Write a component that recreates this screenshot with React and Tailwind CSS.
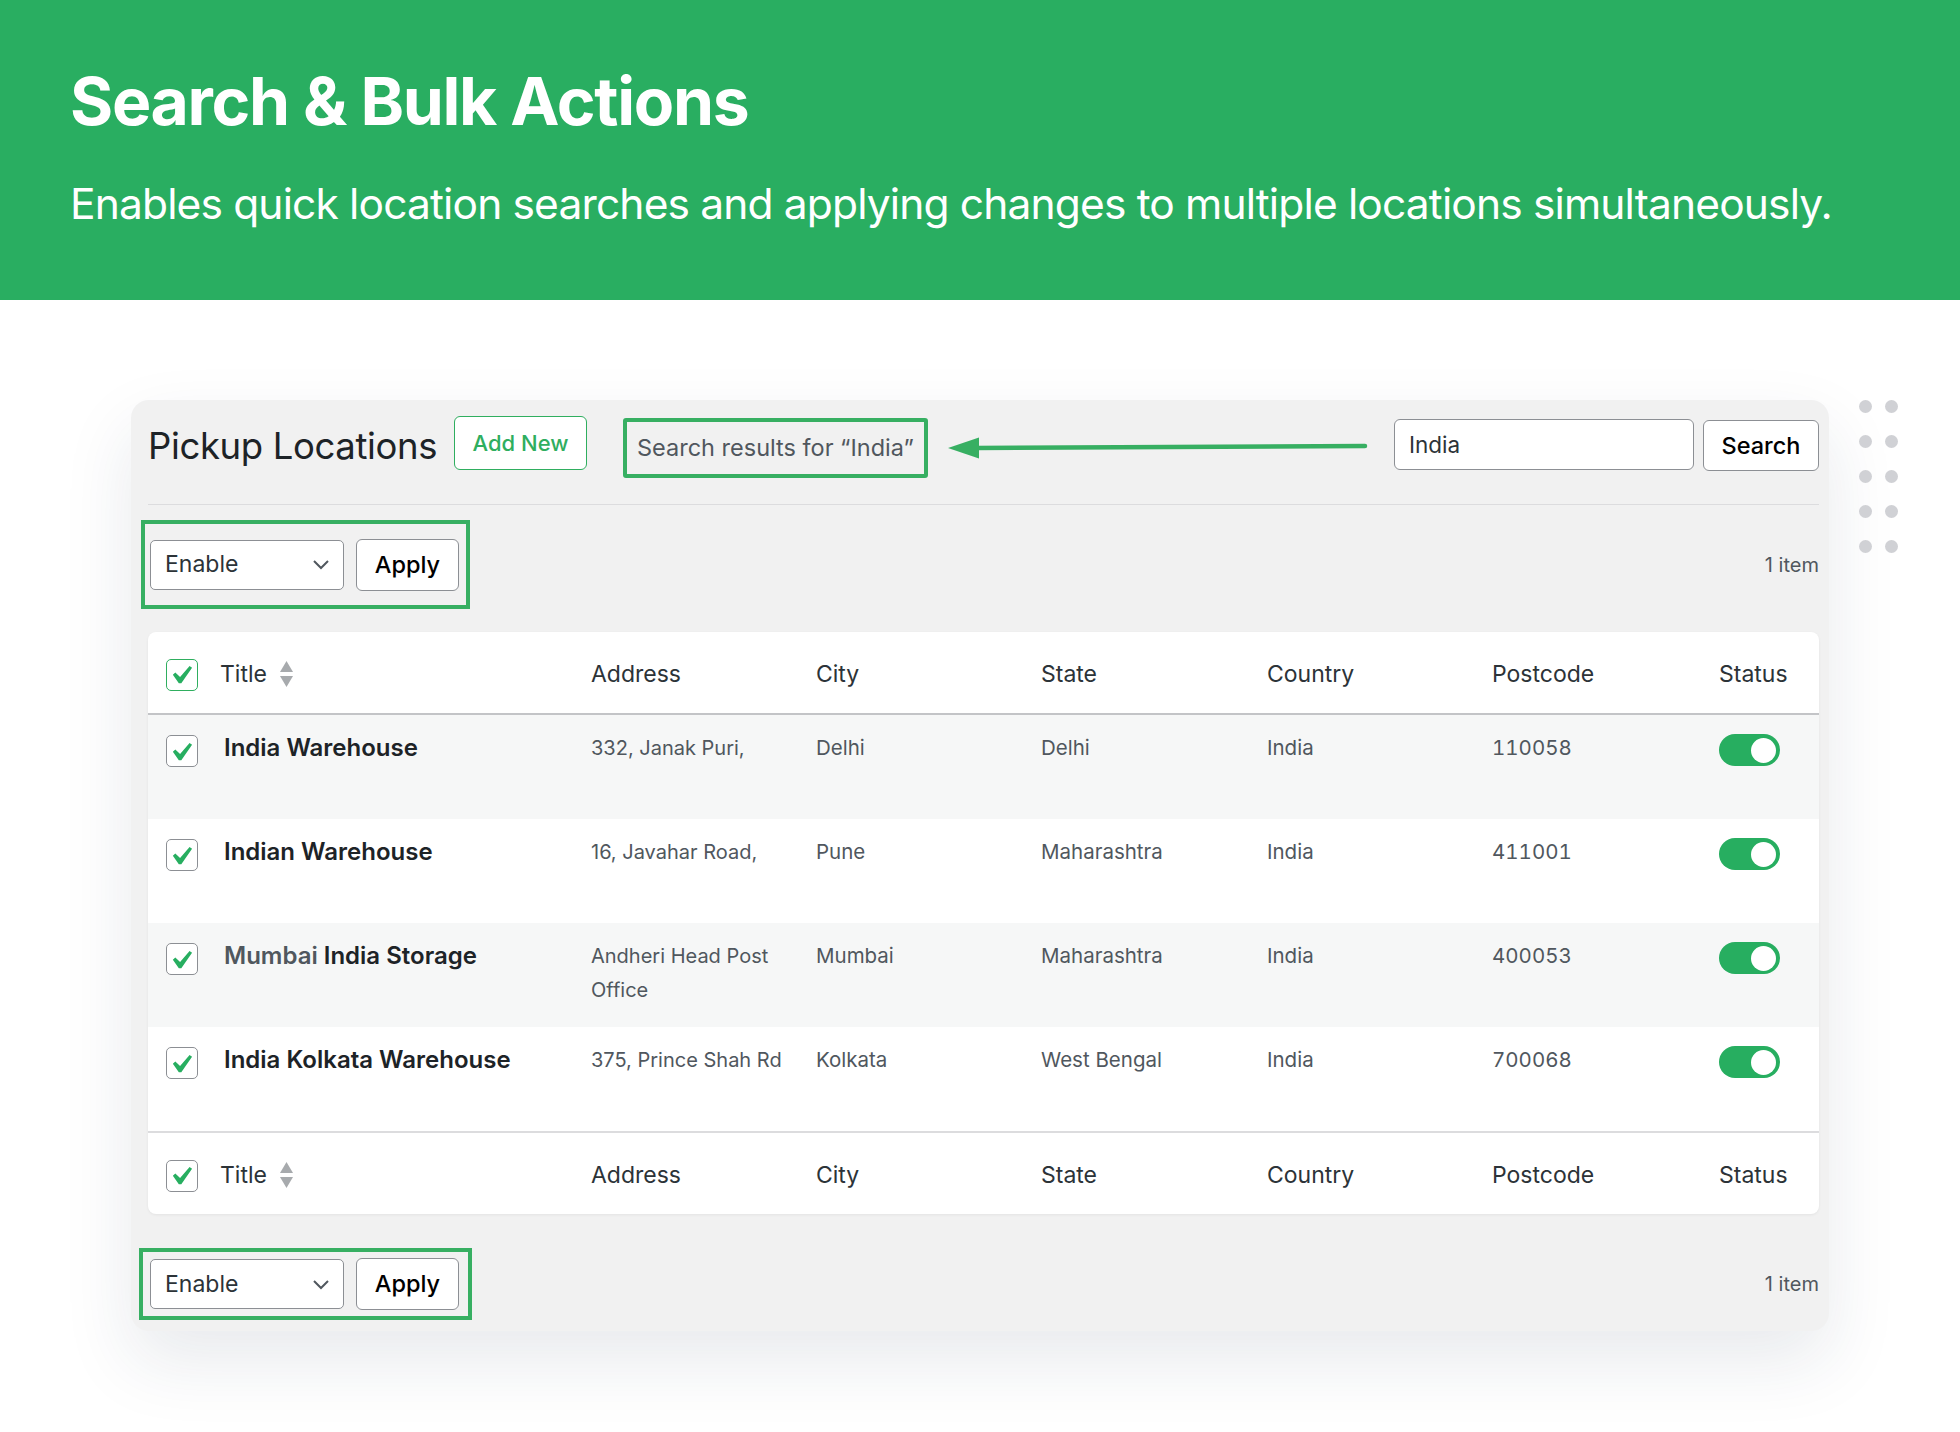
import React from 'react';

const rows = [
  { pre: '', title: 'India Warehouse', address: ['332, Janak Puri,'], city: 'Delhi', state: 'Delhi', country: 'India', postcode: '110058', shade: true },
  { pre: '', title: 'Indian Warehouse', address: ['16, Javahar Road,'], city: 'Pune', state: 'Maharashtra', country: 'India', postcode: '411001', shade: false },
  { pre: 'Mumbai ', title: 'India Storage', address: ['Andheri Head Post', 'Office'], city: 'Mumbai', state: 'Maharashtra', country: 'India', postcode: '400053', shade: true },
  { pre: '', title: 'India Kolkata Warehouse', address: ['375, Prince Shah Rd'], city: 'Kolkata', state: 'West Bengal', country: 'India', postcode: '700068', shade: false },
];

const cols = 'grid grid-cols-[72px_371px_225px_225px_226px_225px_227px_100px]';

function Check({ green }) {
  return (
    <span
      className={`flex h-[32px] w-[32px] items-center justify-center rounded-[5px] border-[1.5px] bg-white ${
        green ? 'border-[#2fae5f]' : 'border-[#8c8f94]'
      }`}
    >
      <svg width="37" height="37" viewBox="0 0 20 20" className="overflow-visible">
        <path d="M14.83 4.89l1.34.94-5.81 8.38H9.02L5.78 9.67l1.34-1.25 2.57 2.4z" fill="#27ae60" transform="translate(-1 0.5)" />
      </svg>
    </span>
  );
}

function SortIcon() {
  return (
    <svg width="15" height="27" viewBox="0 0 15 27" className="ml-[12px]">
      <path d="M7.5 0 L14 11 L1 11 Z" fill="#a7aaad" />
      <path d="M1 15 L14 15 L7.5 26 Z" fill="#a7aaad" />
    </svg>
  );
}

function Toggle() {
  return (
    <span className="flex h-[32px] w-[61px] items-center justify-end rounded-full bg-[#27ae60] pr-[4px]">
      <span className="h-[25px] w-[25px] rounded-full bg-white" />
    </span>
  );
}

function HeadRow({ top }) {
  return (
    <div
      className={`${cols} h-[83px] items-center pt-[4px] text-[23px] text-[#2c3338] ${
        top ? 'border-b-2 border-[#c3c4c7]' : 'border-t-2 border-[#dcdcde]'
      }`}
    >
      <div className="pl-[18px]">
        <Check green={top} />
      </div>
      <div className="flex items-center">
        Title
        <SortIcon />
      </div>
      <div>Address</div>
      <div>City</div>
      <div>State</div>
      <div>Country</div>
      <div>Postcode</div>
      <div>Status</div>
    </div>
  );
}

function BulkBox({ bottom }) {
  return (
    <div
      className={`flex items-center gap-[12px] border-4 border-[#37af62] ${
        bottom ? '-ml-[9px] h-[72px] w-[333px] pl-[7px]' : '-ml-[7px] h-[89px] w-[329px] pl-[5px]'
      }`}
    >
      <div className="flex h-[50px] w-[194px] items-center justify-between rounded-[5px] border border-[#8c8f94] bg-white pl-[14px] pr-[13px] text-[23px] text-[#2c3338]">
        Enable
        <svg width="18" height="11" viewBox="0 0 18 11">
          <path d="M2 2 L9 9 L16 2" fill="none" stroke="#50575e" strokeWidth="2" />
        </svg>
      </div>
      <div className="flex h-[52px] w-[103px] items-center justify-center rounded-[6px] border border-[#8c8f94] bg-white text-[23.5px] font-medium text-black">
        Apply
      </div>
    </div>
  );
}

export default function App() {
  return (
    <div className="relative h-[1432px] w-[1960px] overflow-hidden bg-white font-['Inter',sans-serif]">
      <header className="h-[300px] bg-[#29ae61] pl-[70px] pt-[68px] text-white">
        <h1 className="text-[66px] font-bold leading-none tracking-[-0.02em]">Search &amp; Bulk Actions</h1>
        <p className="mt-[49px] text-[42.5px] leading-none tracking-[-0.02em]">
          Enables quick location searches and applying changes to multiple locations simultaneously.
        </p>
      </header>

      <div className="flex items-start pl-[131px] pt-[100px]">
        <div className="h-[931px] w-[1698px] rounded-[18px] bg-[#f1f1f1] pl-[17px] pr-[10px] pt-[16px] shadow-[0_30px_70px_rgba(25,45,80,0.10)]">
          {/* top bar */}
          <div className="flex h-[62px] items-start">
            <h2 className="mt-[10px] w-[292px] whitespace-nowrap text-[36.5px] leading-[40px] tracking-[-0.01em] text-[#1d2327]">
              Pickup Locations
            </h2>
            <div className="ml-[14px] flex h-[54px] w-[133px] items-center justify-center rounded-[6px] border border-[#2fae5f] bg-white text-[22px] font-medium text-[#2fae5f]">
              Add New
            </div>
            <div className="ml-[36px] mt-[2px] flex h-[60px] w-[305px] items-center rounded-[3px] border-4 border-[#37af62] pl-[10px] text-[23.5px] whitespace-nowrap text-[#50575e]">
              Search results for “India”
            </div>
            <svg width="420" height="30" viewBox="0 0 420 30" className="ml-[20px] mt-[16px]">
              <path d="M28 16 L417 14" stroke="#37af62" strokeWidth="4.5" strokeLinecap="round" fill="none" />
              <path d="M0 16 L31 5.5 L31 26.5 Z" fill="#37af62" />
            </svg>
            <div className="ml-auto mt-[3px] flex h-[51px] w-[300px] items-center rounded-[6px] border border-[#8c8f94] bg-white pl-[14px] text-[22.5px] text-[#2c3338]">
              India
            </div>
            <div className="ml-[9px] mt-[4px] flex h-[51px] w-[116px] items-center justify-center rounded-[6px] border border-[#8c8f94] bg-white text-[23.5px] font-medium text-black">
              Search
            </div>
          </div>

          <div className="mt-[26px] h-px bg-[#dcdcde]" />

          <div className="mt-[15px] flex items-center justify-between">
            <BulkBox />
            <span className="text-[20px] text-[#50575e]">1 item</span>
          </div>

          {/* table */}
          <div className="mt-[23px] overflow-hidden rounded-[8px] bg-white shadow-[0_1px_3px_rgba(0,0,0,0.06)]">
            <HeadRow top />
            {rows.map((r) => (
              <div
                key={r.title}
                className={`${cols} h-[104px] items-start pt-[16px] ${r.shade ? 'bg-[#f6f7f7]' : 'bg-white'}`}
              >
                <div className="mt-[4px] pl-[18px]">
                  <Check />
                </div>
                <div className="whitespace-nowrap pl-[4px] text-[24px] font-semibold leading-[34px] text-[#1d2327]">
                  {r.pre && <span className="text-[#50575e]">{r.pre}</span>}
                  {r.title}
                </div>
                <div className="whitespace-nowrap text-[20px] leading-[34px] text-[#50575e]">
                  {r.address.map((a) => (
                    <div key={a}>{a}</div>
                  ))}
                </div>
                <div className="text-[20.5px] leading-[34px] text-[#50575e]">{r.city}</div>
                <div className="text-[20.5px] leading-[34px] text-[#50575e]">{r.state}</div>
                <div className="text-[20.5px] leading-[34px] text-[#50575e]">{r.country}</div>
                <div className="text-[20.5px] leading-[34px] tabular-nums text-[#50575e]">{r.postcode}</div>
                <div className="mt-[3px]">
                  <Toggle />
                </div>
              </div>
            ))}
            <HeadRow />
          </div>

          <div className="mt-[34px] flex items-center justify-between">
            <BulkBox bottom />
            <span className="text-[20px] text-[#50575e]">1 item</span>
          </div>
        </div>

        <div className="ml-[30px] grid grid-cols-2 gap-x-[13px] gap-y-[22px]">
          {Array.from({ length: 10 }).map((_, i) => (
            <span key={i} className="h-[13px] w-[13px] rounded-full bg-[#d0d1d5]" />
          ))}
        </div>
      </div>
    </div>
  );
}
